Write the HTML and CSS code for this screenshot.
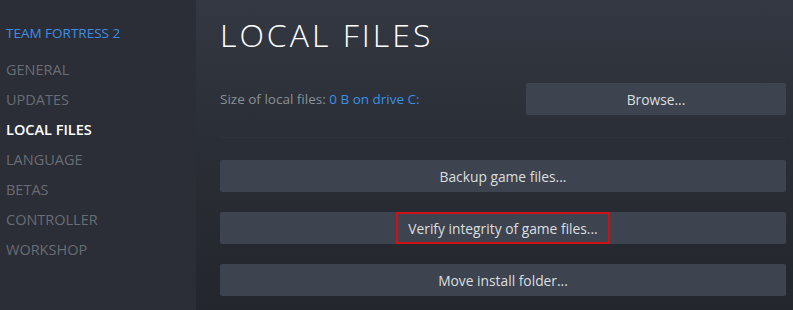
FILE: index.html
```html
<!DOCTYPE html>
<html>
<head>
<meta charset="utf-8">
<link rel="stylesheet" href="styles.css">
</head>
<body>
<div class="window">
  <nav class="sidebar">
    <div class="game">TEAM FORTRESS 2</div>
    <ul class="menu">
      <li>GENERAL</li>
      <li>UPDATES</li>
      <li class="active">LOCAL FILES</li>
      <li>LANGUAGE</li>
      <li>BETAS</li>
      <li>CONTROLLER</li>
      <li>WORKSHOP</li>
    </ul>
  </nav>
  <main class="content">
    <h1 class="title">LOCAL FILES</h1>
    <div class="size-row">
      <div class="size-label">Size of local files: <span class="size-value">0 B on drive C:</span></div>
      <button class="btn browse">Browse...</button>
    </div>
    <div class="sep"></div>
    <div class="actions">
      <button class="btn wide">Backup game files...</button>
      <button class="btn wide"><span class="highlight">Verify integrity of game files...</span></button>
      <button class="btn wide">Move install folder...</button>
    </div>
  </main>
</div>
</body>
</html>
```
FILE: styles.css
```css
html, body {
  margin: 0;
  padding: 0;
  background: #24272e;
}
.window {
  display: flex;
  width: 793px;
  height: 310px;
  overflow: hidden;
  font-family: "Open Sans", "Noto Sans", sans-serif;
}
.sidebar {
  width: 190px;
  padding-left: 6px;
  background: #2b2e36;
  flex-shrink: 0;
}
.game {
  margin-top: 24px;
  height: 18px;
  line-height: 18px;
  font-size: 13.5px;
  color: #3d8ee6;
}
.menu {
  list-style: none;
  margin: 13px 0 0 0;
  padding: 0;
}
.menu li {
  height: 30px;
  line-height: 30px;
  font-size: 14.5px;
  color: #686d74;
}
.menu li.active {
  color: #ffffff;
  font-weight: 600;
}
.content {
  flex: 1;
  padding: 0 7px 0 24px;
  background: linear-gradient(180deg, #343842 0%, #2a2e36 45%, #23262c 100%);
}
.title {
  margin: 17px 0 0 0;
  height: 36px;
  line-height: 36px;
  font-size: 32px;
  font-weight: 300;
  letter-spacing: 3px;
  color: #ffffff;
}
.size-row {
  display: flex;
  align-items: center;
  justify-content: space-between;
  margin-top: 30px;
}
.size-label {
  font-size: 13.5px;
  color: #8a9097;
}
.size-value {
  color: #3d8ee6;
}
.btn {
  height: 32px;
  border: none;
  border-radius: 2px;
  background: #3d4450;
  color: #dcdedf;
  font-family: "Open Sans", "Noto Sans", sans-serif;
  font-size: 13.8px;
  padding: 0;
  cursor: pointer;
}
.browse {
  width: 260px;
}
.sep {
  margin-top: 22px;
  height: 1px;
  background: #2f333b;
}
.actions {
  display: flex;
  flex-direction: column;
  gap: 20px;
  margin-top: 22px;
}
.wide {
  width: 100%;
  display: flex;
  align-items: center;
  justify-content: center;
}
.highlight {
  display: inline-flex;
  align-items: center;
  box-sizing: border-box;
  height: 32px;
  padding: 0 10px;
  border: 2px solid #d10f17;
}
```
